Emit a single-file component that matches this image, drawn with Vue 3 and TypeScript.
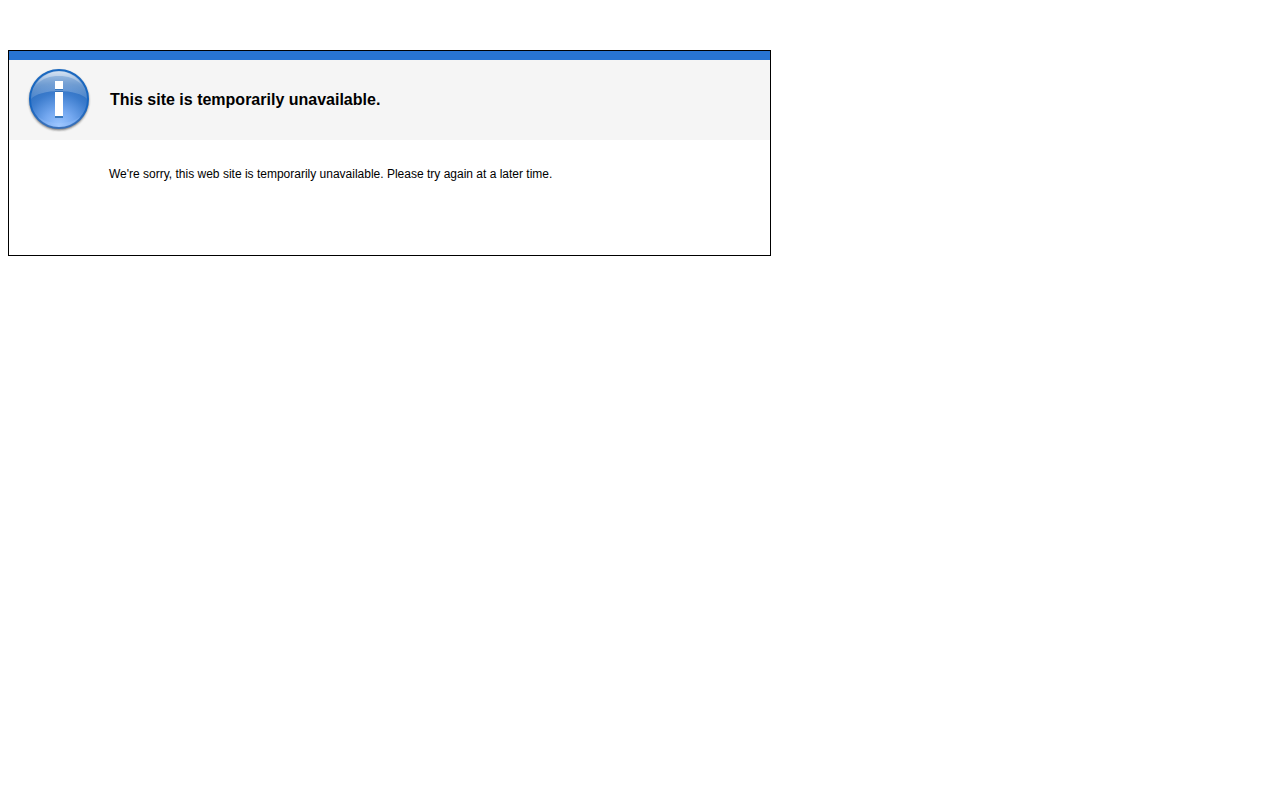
<script setup lang="ts">
const title: string = 'This site is temporarily unavailable.'
const message: string = "We're sorry, this web site is temporarily unavailable. Please try again at a later time."
</script>

<template>
  <main class="notice">
    <header class="notice-header">
      <svg class="info-icon" viewBox="0 0 64 64" aria-hidden="true">
        <defs>
          <radialGradient id="glow" gradientUnits="userSpaceOnUse" cx="32" cy="58" r="44">
            <stop offset="0" stop-color="#9cc6ff" />
            <stop offset="0.35" stop-color="#74a8f0" />
            <stop offset="0.75" stop-color="#3c7ccd" />
            <stop offset="1" stop-color="#2a6dbd" />
          </radialGradient>
          <linearGradient id="gloss" x1="0" y1="0" x2="0" y2="1">
            <stop offset="0" stop-color="#fff" stop-opacity="0.6" />
            <stop offset="0.5" stop-color="#fff" stop-opacity="0.32" />
            <stop offset="1" stop-color="#fff" stop-opacity="0.12" />
          </linearGradient>
          <linearGradient id="crown" x1="0" y1="0" x2="0" y2="1">
            <stop offset="0" stop-color="#fff" stop-opacity="0.5" />
            <stop offset="1" stop-color="#fff" stop-opacity="0.12" />
          </linearGradient>
          <linearGradient id="rim" x1="0" y1="0" x2="0" y2="1">
            <stop offset="0" stop-color="#1b69c0" />
            <stop offset="0.6" stop-color="#1665c1" />
            <stop offset="1" stop-color="#3a70b8" />
          </linearGradient>
          <filter id="soft" x="-10%" y="-10%" width="120%" height="120%">
            <feGaussianBlur stdDeviation="0.8" />
          </filter>
        </defs>
        <circle cx="32" cy="32.4" r="29.8" fill="#333" opacity="0.65" filter="url(#soft)" />
        <circle cx="32" cy="31" r="29" fill="url(#glow)" stroke="url(#rim)" stroke-width="2" />
        <path d="M4 31a28 28 0 0 1 56 0C56 26 44 23 32 23S8 26 4 31z" fill="url(#gloss)" />
        <path d="M9 17C19 -1 45 -1 55 17C48 10 41 8 32 8S16 10 9 17z" fill="url(#crown)" />
        <path d="M10 48C19 63 45 63 54 48C47 53 41 55 32 55S17 53 10 48z" fill="#a9ceff" opacity="0.2" />
        <path d="M28 20h8v2h-8zM28 48h8v2h-8z" fill="#3978bd" />
        <path d="M28 23h8v1h-8z" fill="#3572b8" />
        <path d="M28 13h8v8h-8zM28 24h8v24h-8z" fill="#fff" />
      </svg>
      <h1>{{ title }}</h1>
    </header>
    <p class="message">{{ message }}</p>
  </main>
</template>

<style>
body {
  margin: 0;
  background: #fff;
}
</style>

<style scoped>
.notice {
  box-sizing: border-box;
  max-width: 763px;
  margin: 50px 8px;
  border: 1px solid #000;
  background: #fff;
  color: #000;
  font-family: "Liberation Sans", Arial, sans-serif;
}

.notice-header {
  display: flex;
  align-items: center;
  gap: 19px;
  padding: 8px 18px;
  border-top: 9px solid #2874d2;
  background: #f5f5f5;
}

.info-icon {
  flex: none;
  width: 64px;
  height: 64px;
}

h1 {
  margin: 0;
  font-size: 16px;
  line-height: 18px;
}

.message {
  margin: 0;
  padding: 27px 20px 74px 100px;
  font-size: 12px;
  line-height: 14px;
}
</style>
